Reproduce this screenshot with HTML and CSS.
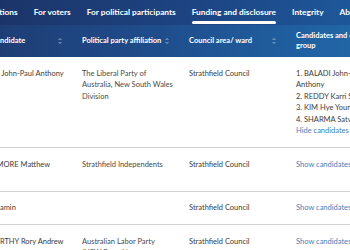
FILE: index.html
```html
<!DOCTYPE html>
<html lang="en">
<head>
<meta charset="utf-8">
<title>Candidates</title>
<link rel="stylesheet" href="styles.css">
</head>
<body>
<div class="page">
  <nav class="nav">
    <a class="nav-item">Elections</a>
    <a class="nav-item">For voters</a>
    <a class="nav-item">For political participants</a>
    <a class="nav-item active">Funding and disclosure</a>
    <a class="nav-item">Integrity</a>
    <a class="nav-item">About us</a>
  </nav>
  <table class="grid">
    <colgroup><col class="c1"><col class="c2"><col class="c3"><col class="c4"></colgroup>
    <thead>
      <tr>
        <th><span class="th-in"><span>Lead candidate</span><svg class="sort" viewBox="0 0 4 8"><path d="M0.6 3 L2 1.5 L3.4 3 M0.6 5 L2 6.5 L3.4 5" fill="none" stroke="currentColor" stroke-width="0.8"/></svg></span></th>
        <th><span class="th-in"><span>Political party affiliation</span><svg class="sort" viewBox="0 0 4 8"><path d="M0.6 3 L2 1.5 L3.4 3 M0.6 5 L2 6.5 L3.4 5" fill="none" stroke="currentColor" stroke-width="0.8"/></svg></span></th>
        <th><span class="th-in"><span>Council area/ ward</span><svg class="sort" viewBox="0 0 4 8"><path d="M0.6 3 L2 1.5 L3.4 3 M0.6 5 L2 6.5 L3.4 5" fill="none" stroke="currentColor" stroke-width="0.8"/></svg></span></th>
        <th><span class="th-in"><span>Candidates and other group</span></span></th>
      </tr>
    </thead>
    <tbody>
      <tr>
        <td>BALADI John-Paul Anthony</td>
        <td class="party">The Liberal Party of Australia, New South Wales Division</td>
        <td>Strathfield Council</td>
        <td>
          <ol class="list">
            <li>1. BALADI John-Paul Anthony</li>
            <li>2. REDDY Karri Sai</li>
            <li>3. KIM Hye Young</li>
            <li>4. SHARMA Satvir</li>
          </ol>
          <a class="link">Hide candidates</a>
        </td>
      </tr>
      <tr class="tall">
        <td>BLACKMORE Matthew</td>
        <td class="party">Strathfield Independents</td>
        <td>Strathfield Council</td>
        <td><a class="link">Show candidates</a></td>
      </tr>
      <tr>
        <td>LEI Benjamin</td>
        <td class="party"></td>
        <td>Strathfield Council</td>
        <td><a class="link">Show candidates</a></td>
      </tr>
      <tr>
        <td>MACCARTHY Rory Andrew</td>
        <td class="party">Australian Labor Party (NSW Branch)</td>
        <td>Strathfield Council</td>
        <td><a class="link">Show candidates</a></td>
      </tr>
    </tbody>
  </table>
</div>
</body>
</html>
```
FILE: styles.css
```css
html, body {
  margin: 0;
  padding: 0;
  background: #ffffff;
  overflow: hidden;
}
body {
  font-family: Lato, "Open Sans", sans-serif;
  width: 350px;
  height: 250px;
}
.page {
  margin-left: -33px;
  width: 520px;
}
.nav {
  display: flex;
  gap: 16px;
  height: 25px;
  padding-left: 17px;
  align-items: flex-start;
  background: linear-gradient(90deg, #1b3264 0%, #1d4584 45%, #1e5c9f 80%, #2068a9 100%);
}
.nav-item {
  display: flex;
  flex-direction: column;
  padding-top: 7px;
  color: #ffffff;
  font-weight: 700;
  font-size: 8.3px;
  line-height: 10px;
  white-space: nowrap;
}
.nav-item.active::after {
  content: "";
  display: block;
  height: 3px;
  margin-top: 4px;
  border-radius: 2px;
  background: #ffffff;
}
.grid {
  border-collapse: collapse;
  table-layout: fixed;
  width: 428px;
}
.c1, .c2, .c3, .c4 { width: 107px; }
thead tr {
  background: linear-gradient(90deg, #1e3a70 0%, #1f4d8c 45%, #2061a2 80%, #246cab 100%);
}
th {
  height: 32px;
  padding: 0 12px 0 8px;
  text-align: left;
  vertical-align: middle;
  color: #ffffff;
  font-weight: 700;
  font-size: 7.5px;
  line-height: 10px;
}
.th-in {
  display: flex;
  justify-content: space-between;
  align-items: center;
}
.sort {
  width: 4px;
  height: 8px;
  color: #b4c7e0;
  flex: none;
}
td {
  padding: 10.5px 8px;
  vertical-align: top;
  color: #3c3c3c;
  font-size: 7.5px;
  line-height: 11.5px;
  border-bottom: 1px solid #d2d2d2;
}
td:first-child { padding-left: 6px; }
td.party { color: #4a4a4a; }
tr.tall td { padding-bottom: 20.5px; }
.list {
  list-style: none;
  margin: 0;
  padding: 0;
}
.link {
  color: #3f82b8;
}
```
